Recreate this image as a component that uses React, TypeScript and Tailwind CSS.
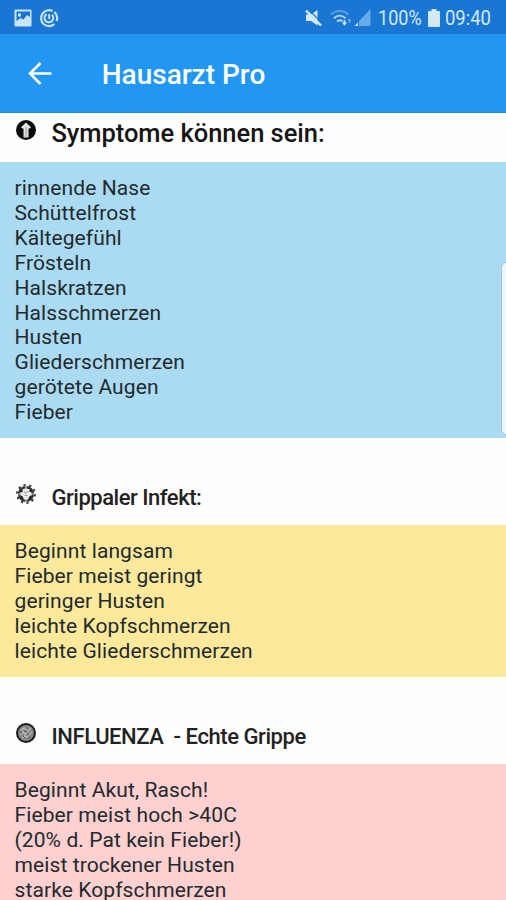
import React from "react";

type IconProps = { className?: string };

const PictureIcon = ({ className }: IconProps) => (
  <svg className={className} width="18" height="18" viewBox="0 0 18 18">
    <path fillRule="evenodd" fill="#c9e4f9" d="M1.500 0.500h15a1 1 0 0 1 1 1v15a1 1 0 0 1-1 1h-15a1 1 0 0 1-1-1v-15a1 1 0 0 1 1-1zM2.500 2.500v9.500l4-3 3 1.500 3.500-4.500 3 2v-5.500zM4 4.500h3v3h-3z" />
  </svg>
);

const SwirlIcon = ({ className }: IconProps) => (
  <svg className={className} width="20" height="20" viewBox="0 0 20 20" fill="none" stroke="#c9e4f9">
    <path strokeWidth="2.200" d="M15.500 16A8 8 0 1 1 13.500 2.900" />
    <path strokeWidth="2" d="M7.500 6.200a4.400 4.400 0 1 0 5.500.6M10.200 6v5" />
    <path strokeWidth="2.200" d="M15.300 4a8 8 0 0 1 2.200 9" />
  </svg>
);

const MuteIcon = ({ className }: IconProps) => (
  <svg className={className} width="17" height="18" viewBox="0 0 17 18">
    <path fill="#d3e9fa" d="M1 5.500h5L12.500 1v15.500L6 12H1z" />
    <path d="M3.500 0.500l14 14" stroke="#1976d2" strokeWidth="1.200" />
    <path d="M1 1.500 16 16.500" stroke="#d3e9fa" strokeWidth="2.400" />
  </svg>
);

const WifiIcon = ({ className }: IconProps) => (
  <svg className={className} width="22" height="18" viewBox="0 0 22 18" fill="none" strokeWidth="1.900">
    <path d="M1 5.500C6 .8 13.500.8 18.500 5.500" stroke="#5ba3e4" />
    <path d="M4 9.200c3.500-3.200 8-3.200 11.500 0M7 12.500c1.800-1.600 4-1.600 5.500-.2" stroke="#b5d8f5" />
    <path d="M14.500 11v4m-1.700-1.500 1.700 2 1.700-2" stroke="#c5e1f8" strokeWidth="1.700" />
    <path d="M19.500 14v-4m-1.500 2 1.500-2 1.500 2" stroke="#5ba3e4" strokeWidth="1.300" />
  </svg>
);

const SignalIcon = ({ className }: IconProps) => (
  <svg className={className} width="17" height="18" viewBox="0 0 17 18">
    <path fill="#65abe8" d="M16.500 0v17H5v-5z" />
    <path fill="#d3e9fa" d="M4 13.500V17H.5z" />
  </svg>
);

const BatteryIcon = ({ className }: IconProps) => (
  <svg className={className} width="12" height="18" viewBox="0 0 12 18">
    <path fill="#d3e9fa" d="M3.500 0h5v2H11a1 1 0 0 1 1 1v14a1 1 0 0 1-1 1H1a1 1 0 0 1-1-1V3a1 1 0 0 1 1-1h2.500z" />
  </svg>
);

const BackIcon = () => (
  <svg width="24" height="24" viewBox="0 0 24 24" fill="none" stroke="white" strokeWidth="2.600">
    <path d="M23.500 12.500H2.500M12.500 2 2 12.500l10.500 10.500" />
  </svg>
);

const UpIcon = () => (
  <svg width="20" height="20" viewBox="0 0 20 20">
    <circle cx="10" cy="10" r="10" fill="#0b0b0b" />
    <path d="M10 2.500l5 4.800-1.200 1.200H12.500V17.500h-5V8.500H6.200L5 7.300z" fill="#e4e4e4" />
    <path d="M10 7v10" stroke="#b0b0b0" strokeWidth="1.500" />
  </svg>
);

const GearIcon = () => (
  <svg width="20" height="20" viewBox="0 0 20 20" fill="none">
    <circle cx="10" cy="10" r="9" stroke="#444" strokeWidth="2" strokeDasharray="2.500 3.150" />
    <circle cx="10" cy="10" r="6.800" stroke="#333" strokeWidth="2.600" />
    <circle cx="10" cy="10" r="5.500" fill="#ededed" />
    <path d="M5 5.500 6 8M15 5.500 14 8M5 12l2 3M15 12l-2 3" stroke="#222" strokeWidth="2" />
    <path d="M10 1.500v3M1.500 10h3M15.500 10h3M10 15.500v3" stroke="#e0e0e0" strokeWidth="1.200" />
    <path d="M8 7l2 2.500L12 7M8.500 11.500h3" stroke="#999" strokeWidth="1" />
  </svg>
);

const VirusIcon = () => (
  <svg width="20" height="20" viewBox="0 0 20 20">
    <circle cx="10" cy="10" r="9" fill="#858585" stroke="#1b1b1b" strokeWidth="2" />
    <path d="M4 12l3-3 2 2 6-6M6 15l3-2 2 1 5-5M5 7l3-2 2 2" stroke="#b5b5b5" strokeWidth="1.600" fill="none" />
    <path d="M4 9l2 1M8 8l3 1M11 11l2 1M7 13l2 2M12 15l2-1" stroke="#555" strokeWidth="1" />
  </svg>
);

const symptoms = [
  "rinnende Nase",
  "Schüttelfrost",
  "Kältegefühl",
  "Frösteln",
  "Halskratzen",
  "Halsschmerzen",
  "Husten",
  "Gliederschmerzen",
  "gerötete Augen",
  "Fieber",
];

const infection = [
  "Beginnt langsam",
  "Fieber meist geringt",
  "geringer Husten",
  "leichte Kopfschmerzen",
  "leichte Gliederschmerzen",
];

const influenza = [
  "Beginnt Akut, Rasch!",
  "Fieber meist hoch >40C",
  "(20% d. Pat kein Fieber!)",
  "meist trockener Husten",
  "starke Kopfschmerzen",
];

const Lines = ({ items, className }: { items: string[]; className: string }) => (
  <div className={`shrink-0 pt-[14.4px] pl-[14.5px] text-[21px] leading-[24.85px] tracking-[0.1px] text-[#222a2e] ${className}`}>
    {items.map((text) => (
      <div key={text} className="whitespace-nowrap">{text}</div>
    ))}
  </div>
);

export default function App() {
  return (
    <div className="relative flex h-[900px] w-[506px] flex-col overflow-hidden bg-[#fefefe] font-['Roboto',sans-serif]">
      <div className="flex h-[34px] shrink-0 items-center bg-[#1976d2] pt-px text-[#d3e9fa]">
        <PictureIcon className="ml-[14px]" />
        <SwirlIcon className="ml-[7px]" />
        <MuteIcon className="ml-[246px]" />
        <WifiIcon className="ml-[8px]" />
        <SignalIcon className="ml-[2px]" />
        <div className="ml-[7px] w-[45px] text-[20.5px] leading-[34px] whitespace-nowrap">
          <span className="inline-block origin-left scale-x-[0.88] pt-px">100%</span>
        </div>
        <BatteryIcon className="ml-[5px]" />
        <div className="ml-[5px] text-[20.5px] leading-[34px] whitespace-nowrap">
          <span className="inline-block origin-left scale-x-[0.9] pt-px">09:40</span>
        </div>
      </div>
      <div className="flex h-[79px] shrink-0 items-center border-b border-[#2187dc] bg-[#2196f3] pl-[28px]">
        <BackIcon />
        <h1 className="ml-[49.7px] pt-[3px] text-[28px] font-medium text-white">Hausarzt Pro</h1>
      </div>

      <div className="flex h-[49px] shrink-0 pt-[7px] pl-[16px]">
        <UpIcon />
        <h2 className="-mt-[2px] ml-[15.4px] text-[25.5px] leading-[30px] font-medium tracking-[-0.03px] text-[#151515]">Symptome können sein:</h2>
      </div>
      <Lines items={symptoms} className="h-[276px] bg-[#abdbf2]" />

      <div className="flex h-[87px] shrink-0 pt-[46px] pl-[16px]">
        <GearIcon />
        <h2 className="-mt-px ml-[15.500px] text-[22px] leading-[30px] font-medium tracking-[-0.48px] text-[#222]">Grippaler Infekt:</h2>
      </div>
      <Lines items={infection} className="h-[152px] bg-[#fde99b]" />

      <div className="flex h-[87px] shrink-0 pt-[46px] pl-[16px]">
        <VirusIcon />
        <h2 className="-mt-px ml-[15.500px] text-[22px] leading-[30px] font-medium tracking-[-0.43px] whitespace-pre text-[#222]">{"INFLUENZA  - Echte Grippe"}</h2>
      </div>
      <Lines items={influenza} className="h-[136px] bg-[#fed0d0]" />

      <div className="absolute top-[262px] -right-[6px] h-[173px] w-[11px] rounded-[6px] border border-[#9fc5d3] bg-[#edf7fd]" />
    </div>
  );
}
